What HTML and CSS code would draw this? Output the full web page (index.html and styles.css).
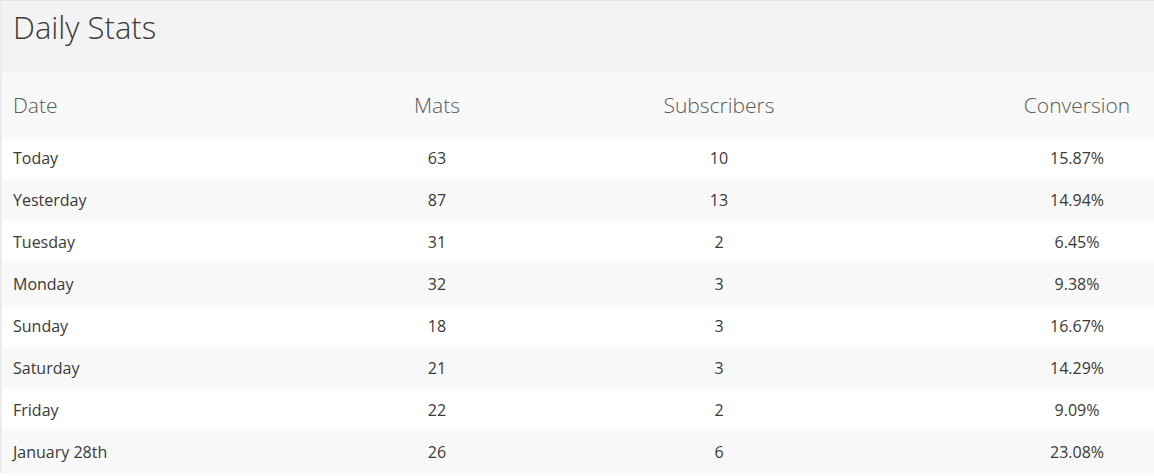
FILE: index.html
```html
<!DOCTYPE html>
<html>
<head>
<meta charset="utf-8">
<link rel="stylesheet" href="styles.css">
</head>
<body>
<div class="panel">
  <div class="panel-head"><h1 class="title">Daily Stats</h1></div>
  <div class="table">
    <div class="row head-row">
      <div class="cell c-date">Date</div>
      <div class="cell c-num">Mats</div>
      <div class="cell c-num">Subscribers</div>
      <div class="cell c-conv">Conversion</div>
    </div>
    <div class="row">
      <div class="cell c-date">Today</div><div class="cell c-num">63</div><div class="cell c-num">10</div><div class="cell c-conv">15.87%</div>
    </div>
    <div class="row alt">
      <div class="cell c-date">Yesterday</div><div class="cell c-num">87</div><div class="cell c-num">13</div><div class="cell c-conv">14.94%</div>
    </div>
    <div class="row">
      <div class="cell c-date">Tuesday</div><div class="cell c-num">31</div><div class="cell c-num">2</div><div class="cell c-conv">6.45%</div>
    </div>
    <div class="row alt">
      <div class="cell c-date">Monday</div><div class="cell c-num">32</div><div class="cell c-num">3</div><div class="cell c-conv">9.38%</div>
    </div>
    <div class="row">
      <div class="cell c-date">Sunday</div><div class="cell c-num">18</div><div class="cell c-num">3</div><div class="cell c-conv">16.67%</div>
    </div>
    <div class="row alt">
      <div class="cell c-date">Saturday</div><div class="cell c-num">21</div><div class="cell c-num">3</div><div class="cell c-conv">14.29%</div>
    </div>
    <div class="row">
      <div class="cell c-date">Friday</div><div class="cell c-num">22</div><div class="cell c-num">2</div><div class="cell c-conv">9.09%</div>
    </div>
    <div class="row alt">
      <div class="cell c-date">January 28th</div><div class="cell c-num">26</div><div class="cell c-num">6</div><div class="cell c-conv">23.08%</div>
    </div>
  </div>
</div>
</body>
</html>
```
FILE: styles.css
```css
html, body {
  margin: 0;
  padding: 0;
  background: #ffffff;
}
body {
  font-family: "Open Sans", "Liberation Sans", sans-serif;
  color: #3a3a3a;
}
.panel {
  border-left: 2px solid #ececec;
  border-top: 1px solid #e6e6e6;
}
.panel-head {
  background: #f3f3f3;
  height: 72px;
  padding: 0 11px;
}
.title {
  margin: 0;
  font-weight: 300;
  font-size: 31px;
  line-height: 52px;
  color: #3a3a3a;
}
.row {
  display: grid;
  grid-template-columns: 328px 214px 350px 1fr;
  align-items: center;
  height: 42px;
  font-size: 16px;
}
.row.alt {
  background: #f8f8f8;
}
.head-row {
  height: 64px;
  background: #f8f8f8;
  font-weight: 300;
  font-size: 21px;
  color: #5a5a5a;
}
.cell {
  white-space: nowrap;
}
.c-date {
  padding-left: 11px;
}
.c-num {
  text-align: center;
}
.c-conv {
  text-align: center;
  padding-left: 106px;
}
```
